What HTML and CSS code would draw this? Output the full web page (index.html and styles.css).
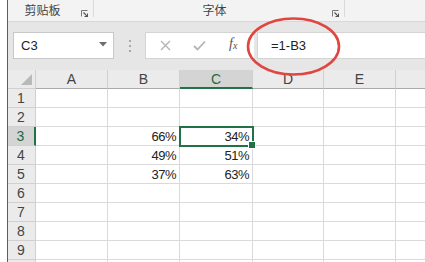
FILE: index.html
```html
<!DOCTYPE html>
<html>
<head>
<meta charset="utf-8">
<link rel="stylesheet" href="styles.css">
</head>
<body>
<div class="app">
  <div class="edge"></div>
  <div class="main">
    <div class="ribbon">
      <div class="group g1">
        <span class="glabel">剪贴板</span>
        <svg class="launch" width="7" height="7" viewBox="0 0 7 7"><path d="M0.5 6.5V0.5H6.5" fill="none" stroke="#777" stroke-width="1"/><path d="M2.5 2.5L6.5 6.5M6.5 3.5V6.5H3.5" fill="none" stroke="#555" stroke-width="1.2"/></svg>
      </div>
      <div class="group g2">
        <span class="glabel">字体</span>
        <svg class="launch" width="7" height="7" viewBox="0 0 7 7"><path d="M0.5 6.5V0.5H6.5" fill="none" stroke="#777" stroke-width="1"/><path d="M2.5 2.5L6.5 6.5M6.5 3.5V6.5H3.5" fill="none" stroke="#555" stroke-width="1.2"/></svg>
      </div>
      <div class="group g3"></div>
    </div>
    <div class="fbar">
      <div class="namebox"><span>C3</span><svg width="8" height="5" viewBox="0 0 8 5"><path d="M0 0H8L4 4.5Z" fill="#6e6e6e"/></svg></div>
      <div class="dots"><i></i><i></i><i></i></div>
      <div class="fbtns">
        <svg class="btn" width="11" height="11" viewBox="0 0 11 11"><path d="M1 1L10 10M10 1L1 10" stroke="#b4b4b4" stroke-width="1.4"/></svg>
        <svg class="btn" width="13" height="11" viewBox="0 0 13 11"><path d="M1 6L4.5 9.5L12 1.5" fill="none" stroke="#b4b4b4" stroke-width="1.8"/></svg>
        <span class="fx">f<sub>x</sub></span>
      </div>
      <div class="finput">=1-B3</div>
    </div>
    <div class="sheet">
      <div class="h corner"><svg width="11" height="11" viewBox="0 0 11 11"><path d="M11 0V11H0Z" fill="#b9b9b9"/></svg></div>
      <div class="h col">A</div><div class="h col">B</div><div class="h col hl">C</div><div class="h col">D</div><div class="h col">E</div><div class="h col last"></div>

      <div class="h row">1</div><div class="c"></div><div class="c"></div><div class="c"></div><div class="c"></div><div class="c"></div><div class="c last"></div>
      <div class="h row">2</div><div class="c"></div><div class="c"></div><div class="c"></div><div class="c"></div><div class="c"></div><div class="c last"></div>
      <div class="h row hl">3</div><div class="c"></div><div class="c">66%</div><div class="c sel">34%</div><div class="c"></div><div class="c"></div><div class="c last"></div>
      <div class="h row">4</div><div class="c"></div><div class="c">49%</div><div class="c">51%</div><div class="c"></div><div class="c"></div><div class="c last"></div>
      <div class="h row">5</div><div class="c"></div><div class="c">37%</div><div class="c">63%</div><div class="c"></div><div class="c"></div><div class="c last"></div>
      <div class="h row">6</div><div class="c"></div><div class="c"></div><div class="c"></div><div class="c"></div><div class="c"></div><div class="c last"></div>
      <div class="h row">7</div><div class="c"></div><div class="c"></div><div class="c"></div><div class="c"></div><div class="c"></div><div class="c last"></div>
      <div class="h row">8</div><div class="c"></div><div class="c"></div><div class="c"></div><div class="c"></div><div class="c"></div><div class="c last"></div>
      <div class="h row">9</div><div class="c"></div><div class="c"></div><div class="c"></div><div class="c"></div><div class="c"></div><div class="c last"></div>
      <div class="h row"></div><div class="c"></div><div class="c"></div><div class="c"></div><div class="c"></div><div class="c"></div><div class="c last"></div>
    </div>
  </div>
</div>
<svg class="circle" width="425" height="262" viewBox="0 0 425 262"><ellipse cx="293.5" cy="46.5" rx="45.5" ry="28" fill="none" stroke="#e0463f" stroke-width="2.6"/></svg>
</body>
</html>
```
FILE: styles.css
```css
* { box-sizing: border-box; }
html, body { margin: 0; padding: 0; }
body {
  width: 425px;
  height: 262px;
  overflow: hidden;
  background: #fff;
  font-family: "Liberation Sans", "Noto Sans CJK SC", sans-serif;
  position: relative;
}
.app { display: flex; height: 262px; }
.edge {
  width: 8px;
  flex: none;
  border-right: 1px solid #2c7a4f;
  background: #fff;
}
.main { flex: 1; display: flex; flex-direction: column; overflow: hidden; }

.ribbon {
  height: 22px;
  flex: none;
  display: flex;
  background: #f3f3f3;
  border-bottom: 1px solid #d8d8d8;
}
.group {
  position: relative;
  display: flex;
  align-items: flex-start;
  justify-content: center;
  border-right: 1px solid #dadada;
  height: 17px;
}
.g1 { width: 86px; }
.g2 { width: 251px; }
.g3 { flex: 1; border-right: none; }
.glabel {
  font-family: "Noto Sans CJK SC", sans-serif;
  font-size: 12px;
  line-height: 14px;
  margin-top: 3px;
  color: #444;
}
.g1 .glabel { margin-right: 16px; }
.g2 .glabel { margin-right: 9px; }
.launch { position: absolute; right: 5px; top: 10px; }

.fbar {
  height: 48px;
  flex: none;
  background: #e6e6e6;
  display: flex;
  align-items: flex-start;
  padding-top: 10px;
}
.namebox {
  width: 101px;
  height: 27px;
  margin-left: 5px;
  background: #fff;
  border: 1px solid #c8c8c8;
  display: flex;
  align-items: center;
  justify-content: space-between;
  padding: 0 6px 0 7px;
  font-size: 13px;
  color: #222;
}
.namebox svg { margin-top: -2px; }
.dots {
  width: 31px;
  height: 27px;
  display: flex;
  flex-direction: column;
  align-items: center;
  justify-content: center;
  gap: 3px;
}
.dots i { display: block; width: 2px; height: 2px; background: #a8a8a8; }
.fbtns {
  width: 109px;
  height: 27px;
  background: #fff;
  border: 1px solid #d4d4d4;
  border-right: none;
  display: flex;
  align-items: center;
  padding-left: 14px;
}
.fbtns .btn:nth-child(1) { margin-right: 22px; }
.fbtns .btn:nth-child(2) { margin-right: 23px; }
.fx {
  font-family: "Liberation Serif", serif;
  font-style: italic;
  font-size: 14px;
  color: #555;
  margin-top: -3px;
}
.fx sub { font-size: 10px; vertical-align: -1px; }
.finput {
  flex: 1;
  height: 27px;
  margin-left: 3px;
  background: #fff;
  border: 1px solid #d4d4d4;
  border-right: none;
  display: flex;
  align-items: center;
  padding-left: 13px;
  font-size: 13px;
  color: #222;
}

.sheet {
  display: grid;
  grid-template-columns: 28px 72px 72px 73px 71px 72px 1fr;
  grid-auto-rows: 19px;
  font-size: 13px;
  color: #333;
}
.h {
  background: #ebebeb;
  border-right: 1px solid #d0d0d0;
  border-bottom: 1px solid #d0d0d0;
  display: flex;
  align-items: center;
  justify-content: center;
  color: #444;
  font-size: 14px;
}
.corner { justify-content: flex-end; align-items: flex-end; padding: 0 3px 3px 0; }
.h.col { border-bottom-color: #ababab; }
.h.col.hl { background: #d4d4d4; border-bottom: 2px solid #217346; color: #1e6b40; }
.h.row { padding-right: 1px; }
.h.row.hl { background: #d4d4d4; border-right: 2px solid #217346; color: #1e6b40; }
.c {
  border-right: 1px solid #dadada;
  border-bottom: 1px solid #dadada;
  display: flex;
  align-items: center;
  justify-content: flex-end;
  padding-right: 3px;
  font-size: 13px;
  letter-spacing: -0.5px;
  color: #222;
}
.h.last, .c.last { border-right: none; }
.c.sel {
  position: relative;
  outline: 2px solid #217346;
  outline-offset: -1px;
  z-index: 1;
}
.c.sel::after {
  content: "";
  position: absolute;
  right: -4px;
  bottom: -4px;
  width: 6px;
  height: 6px;
  background: #217346;
  border: 1px solid #fff;
}
.circle { position: absolute; left: 0; top: 0; pointer-events: none; }
```
